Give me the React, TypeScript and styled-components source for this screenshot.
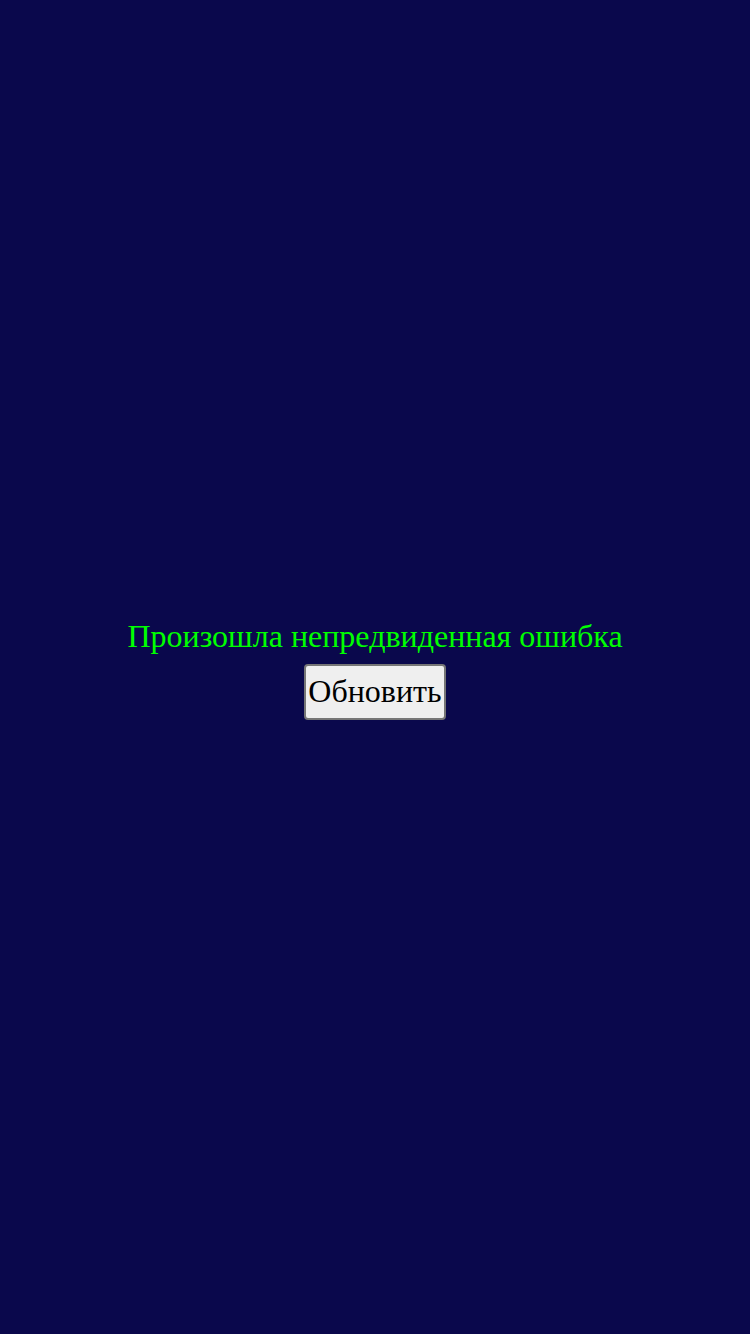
import React from "react";
import styled, { createGlobalStyle } from "styled-components";

const GlobalStyle = createGlobalStyle`
  html, body {
    margin: 0;
    padding: 0;
    background: #0a084c;
  }
  body {
    font-family: "Liberation Serif", "Times New Roman", serif;
  }
`;

const Screen = styled.div`
  min-height: 100vh;
  box-sizing: border-box;
  padding-top: 3px;
  display: flex;
  flex-direction: column;
  align-items: center;
  justify-content: center;
  background: #0a084c;
`;

const Message = styled.div`
  color: #00ff00;
  font-family: "Liberation Serif", "Times New Roman", serif;
  font-size: 32px;
  line-height: normal;
`;

const ReloadButton = styled.button`
  margin-top: 9px;
  font-family: "Liberation Serif", "Times New Roman", serif;
  font-size: 32px;
  color: #000;
  background: #efefef;
  border: 2px solid #767676;
  border-radius: 4px;
  padding: 7px 2px 8px;
  line-height: normal;
  cursor: pointer;
`;

export default function App() {
  return (
    <>
      <GlobalStyle />
      <Screen>
        <Message>Произошла непредвиденная ошибка</Message>
        <ReloadButton onClick={() => window.location.reload()}>Обновить</ReloadButton>
      </Screen>
    </>
  );
}
